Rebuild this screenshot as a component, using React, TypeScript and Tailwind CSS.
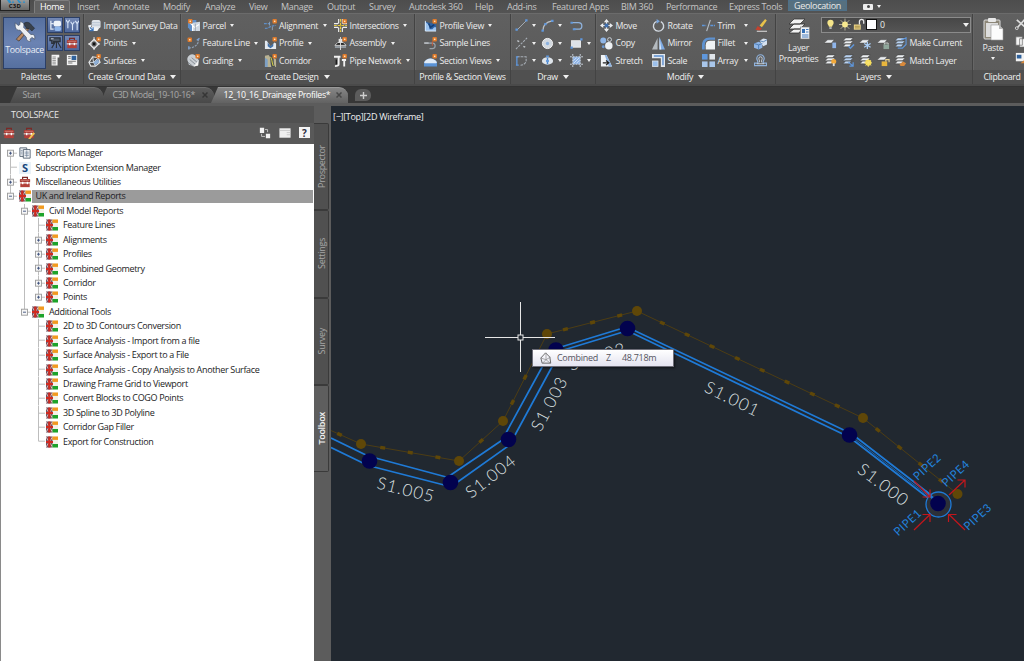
import React from "react";

type Kids = { children?: React.ReactNode };

const Ico = ({ children, w = 13, h = 13, vb = "0 0 14 14" }: Kids & { w?: number; h?: number; vb?: string }) => (
  <svg width={w} height={h} viewBox={vb} className="shrink-0 block" fill="none">
    {children}
  </svg>
);

const Spark = ({ x = 11.5, y = 2.5 }: { x?: number; y?: number }) => (
  <g>
    <rect x={x - 2.4} y={y - 2.4} width="4.8" height="4.8" rx="1" fill="#dd7a2c" />
    <rect x={x - 0.8} y={y - 0.8} width="1.6" height="1.6" fill="#ffe2b8" />
  </g>
);

const icons: Record<string, React.ReactNode> = {
  importSurvey: (
    <Ico>
      <rect x="4" y="1" width="9.5" height="9" rx="2" fill="#dfe4ea" />
      <path d="M4 4h9M4 6.5h9" stroke="#a9b8ca" strokeWidth=".8" />
      <path d="M0 7l4-1-1 3h6l3 1-2 3H2z" fill="#f2f4f6" />
      <path d="M2 9l3 3M5.500 9v3.500H1.500" stroke="#3c74b8" strokeWidth="1.200" />
    </Ico>
  ),
  points: (
    <Ico>
      <path d="M6.500 2.500L11.500 7.500l-5 5-5-5z" stroke="#e8e8e8" strokeWidth="1.400" />
      <path d="M6.500 0v5M6.500 10v4M0 7.500h4.500M9 7.500h4" stroke="#e8e8e8" strokeWidth="1" />
      <circle cx="6.500" cy="7.500" r="1.500" fill="#111" />
      <Spark />
    </Ico>
  ),
  surfaces: (
    <Ico>
      <path d="M1 9l4-6 6 1 2 5-5 4H3z" fill="#4a4a4a" stroke="#e6e6e6" strokeWidth="1.200" />
      <path d="M5 3l1 6 7 0M1 9l5 0 2 4M6 9l5-5" stroke="#dfe6ee" strokeWidth="1" />
      <path d="M6 9l5-4 1 4-4 3z" fill="#8fb0d8" />
      <Spark />
    </Ico>
  ),
  parcel: (
    <Ico>
      <path d="M1 1h9v12H4L1 9z" fill="#5d8fcb" />
      <path d="M6 4l8-1v10H6z" fill="#cfd8e2" />
      <path d="M3 4l5 5 5-3M6 5v8" stroke="#fff" strokeWidth="1.200" />
      <path d="M9 5v8" stroke="#8c97a3" strokeWidth=".8" />
      <Spark x={3.5} />
    </Ico>
  ),
  featureLine: (
    <Ico>
      <path d="M12 2c1 5-2 9-10 10" stroke="#8ea0b4" strokeWidth="1.300" strokeDasharray="2.500 1" />
      <path d="M10.500 3.500l3-2M2 10v3.500" stroke="#7fa4d4" strokeWidth="1.500" />
      <Spark x={3} y={3} />
    </Ico>
  ),
  grading: (
    <Ico>
      <path d="M1 8a5 5 0 019-5l3 4-1 5-4 1.500-6-2z" fill="#c9ced3" />
      <path d="M3 6l7 6M5 4l6 5M1 9l5 4" stroke="#7c838a" strokeWidth=".9" />
      <path d="M7 13.500l5-6v5z" fill="#f6f6f6" />
      <Spark />
    </Ico>
  ),
  alignment: (
    <Ico>
      <path d="M0 5h6M1 10c4 1 4-3 12-3" stroke="#5f8fc8" strokeWidth="1.300" strokeDasharray="3 1" />
      <path d="M6 3v4M9 8v4" stroke="#8fa5bd" strokeWidth="1" />
      <Spark />
    </Ico>
  ),
  profile: (
    <Ico>
      <path d="M1 4v9h12V7l-2-1-2 3-2 1-2-3-2-3z" fill="#e4e9ef" />
      <path d="M4 6l3 4 3-3v3l-3 2-3-2z" fill="#3d6ea8" />
      <Spark />
    </Ico>
  ),
  profileView: (
    <Ico>
      <path d="M1 3v10h12V6z" fill="#2c62a8" />
      <path d="M1 3v10h12v-4l-2 0-2 2-3 0-1-5z" fill="#9cc3ee" />
      <path d="M1.500 2v11H13" stroke="#d8e8fa" strokeWidth="1" />
      <path d="M5 5l2 4 4-3" stroke="#163f74" strokeWidth="1.600" />
      <Spark />
    </Ico>
  ),
  corridor: (
    <Ico>
      <path d="M1 2l4-1 4 2 4 3v8H1z" fill="#b9b293" />
      <path d="M5 1c3 3 1 6 3 13h4c-3-5 0-8-3-12z" fill="#444a50" />
      <path d="M7 3c2 3 1 5 3 10" stroke="#e8e043" strokeWidth="1" />
      <path d="M1 4l3 2v8H1z" fill="#7ea1c6" />
      <Spark />
    </Ico>
  ),
  intersections: (
    <Ico>
      <path d="M5 0v4L4 5H0M0 9h4l1 1v4M9 14v-4l1-1h4M9 0v4l1 1h4" stroke="#eee" strokeWidth="1.200" />
      <path d="M7 0v14M0 7h14" stroke="#e5c93b" strokeWidth="1.300" strokeDasharray="3 1" />
      <Spark />
    </Ico>
  ),
  assembly: (
    <Ico>
      <path d="M1 9l3-3h6l3 3z" fill="#1e1e1e" stroke="#e9e9e9" strokeWidth=".9" />
      <path d="M5 2h4v4H5z" fill="#e5e5e5" />
      <path d="M1 10.800h12" stroke="#a3adb7" strokeWidth="1.600" />
      <path d="M7 0v14" stroke="#ddd" strokeWidth="1" />
      <Spark />
    </Ico>
  ),
  pipeNetwork: (
    <Ico>
      <path d="M0 3h7M5 3v8c0 1.500-1.500 2-4 2" stroke="#f1f1f1" strokeWidth="2" />
      <path d="M11 6v7.500M8.500 6.500H13" stroke="#f1f1f1" strokeWidth="2" />
      <path d="M2.500 6v5" stroke="#1b1b1b" strokeWidth="1.500" />
      <Spark />
    </Ico>
  ),
  sampleLines: (
    <Ico>
      <path d="M1 6.500h8c4 0 4 6 0 6H6" stroke="#9aa3ab" strokeWidth="1.300" />
      <path d="M0 6.500h5" stroke="#c8ccd0" strokeWidth="1.300" />
      <path d="M9 4.500v5" stroke="#c45b3a" strokeWidth="1" />
      <Spark />
    </Ico>
  ),
  sectionViews: (
    <Ico>
      <path d="M0 9c3-5 10-6 14 0v4.500H0z" fill="#5b93d6" />
      <path d="M0 9c3-5 10-6 14 0l-1 1H1z" fill="#dfeaf7" />
      <Spark />
    </Ico>
  ),
  line: (
    <Ico>
      <path d="M2 12L12 2" stroke="#a9b0b8" strokeWidth="1" />
      <path d="M.5 11.500h2.500M11 1.500h2.500" stroke="#5f97dc" strokeWidth="2.400" />
    </Ico>
  ),
  xline: (
    <Ico>
      <path d="M1 13L13 1" stroke="#a9b0b8" strokeWidth="1.100" strokeDasharray="2.500 1.200" />
      <path d="M2.500 4l2 1M9 10l2 1" stroke="#c0c5ca" strokeWidth="1.500" />
    </Ico>
  ),
  pline: (
    <Ico>
      <path d="M2 3h10v4c0 3-3 5-6 5" stroke="#a9b0b8" strokeWidth="1.100" strokeDasharray="3 1" />
      <path d="M2 3v9M1 12h3M1 3h2.500" stroke="#5f97dc" strokeWidth="1.400" />
    </Ico>
  ),
  arc: (
    <Ico>
      <path d="M2 13c0-6 4-10 10-11" stroke="#b9c0c8" strokeWidth="1.200" />
      <path d="M.5 12.500H3M3.500 5.500H6M11 2h2.500" stroke="#5f97dc" strokeWidth="2.400" />
    </Ico>
  ),
  circle: (
    <Ico>
      <circle cx="7" cy="7" r="5.500" fill="#d3d9e0" stroke="#f4f4f4" />
      <circle cx="7" cy="7" r="1.800" fill="#8cb2e0" />
    </Ico>
  ),
  ellipse: (
    <Ico>
      <ellipse cx="7" cy="7.500" rx="6" ry="4" fill="#dfe5eb" />
      <path d="M7 4v7" stroke="#4d86cb" strokeWidth="1.600" />
      <path d="M5.500 2.500h3M5.500 7.500h3" stroke="#5f97dc" strokeWidth="2" />
    </Ico>
  ),
  spline: (
    <Ico>
      <path d="M2 4h7c5 0 5 7 0 7H4" stroke="#8fb2dc" strokeWidth="1.400" />
      <path d="M.5 4H3M3 11h3" stroke="#5f97dc" strokeWidth="2" />
    </Ico>
  ),
  rect: (
    <Ico>
      <rect x="1.500" y="4" width="10" height="7" fill="#dde2e8" stroke="#fff" strokeWidth=".7" />
      <path d="M11 2.500h2.500M.5 11.500H3" stroke="#5f97dc" strokeWidth="2.400" />
    </Ico>
  ),
  hatch: (
    <Ico>
      <rect x="3" y="3" width="8" height="8" fill="#8db3e6" />
      <path d="M0 3h14M0 11h14M3 0v14M11 0v14" stroke="#cfd8e3" strokeWidth="1" strokeDasharray="2 1" />
      <path d="M4 10l6-6M4 7l3-3M7 10l3-3" stroke="#e8f0fa" strokeWidth=".8" />
    </Ico>
  ),
  move: (
    <Ico>
      <path d="M7 0l2.800 3.500H4.200zM7 14l2.800-3.500H4.200zM0 7l3.500-2.800v5.600zM14 7l-3.500-2.800v5.600z" fill="#f0f3f6" />
      <path d="M7 2v10M2 7h10" stroke="#e0e4e8" strokeWidth="1.300" />
      <rect x="5" y="5" width="4" height="4" fill="#3f6fae" />
    </Ico>
  ),
  copy: (
    <Ico>
      <circle cx="3.500" cy="3.800" r="3.200" fill="#8fb5e6" />
      <circle cx="10.300" cy="2.800" r="2.100" stroke="#cfd6dd" strokeWidth="1" />
      <circle cx="9.500" cy="9.500" r="4" fill="#eef1f4" />
      <circle cx="3.500" cy="10.500" r="1.500" fill="#6b98d2" />
    </Ico>
  ),
  stretch: (
    <Ico>
      <path d="M1 13.500V1h6l6 12.500z" fill="#f0f3f6" />
      <path d="M7 1l6 12.500H9.500L5 1z" fill="#8db3e2" />
      <path d="M3 9.500h6M6.500 7l3 2.500-3 2.500" stroke="#222" strokeWidth="1.300" />
    </Ico>
  ),
  rotate: (
    <Ico>
      <path d="M5 2.500a5.500 5.500 0 104.500.2" stroke="#d3dae2" strokeWidth="1.500" />
      <path d="M5 0v5L8.500 2.500z" fill="#78a6e0" />
    </Ico>
  ),
  mirror: (
    <Ico>
      <path d="M6 1v12.500H0z" fill="#b4babf" />
      <path d="M8 0v13.500h6z" fill="#7fabe3" />
      <path d="M8 0v13.500h2z" fill="#dbe8f7" />
    </Ico>
  ),
  scale: (
    <Ico>
      <path d="M0 0h14v14H9.500V4.500H0z" fill="#e3e8ee" />
      <path d="M2 2.200h9.800V12" stroke="#5c8fd0" strokeWidth="1.500" />
      <rect x="0.500" y="7.500" width="6" height="6" fill="#9cc0ec" stroke="#e3e8ee" strokeWidth=".8" />
    </Ico>
  ),
  trim: (
    <Ico>
      <path d="M0 7h4.500M9 7h5" stroke="#5f97dc" strokeWidth="1.500" strokeDasharray="3 .8" />
      <path d="M9 1L5 13" stroke="#b8c0c8" strokeWidth="1.200" />
    </Ico>
  ),
  fillet: (
    <Ico>
      <path d="M0 13.500V9c0-5 3-8.500 8-8.500h6V3H9C5 3 3 5 3 8.500v5z" fill="#5f92d0" />
      <path d="M4 13.500V9c0-3.500 1.500-5 5-5h5v9.500z" fill="#f0f2f4" />
    </Ico>
  ),
  array: (
    <Ico>
      <rect x="0" y="0" width="6" height="6" fill="#5f97dc" />
      <rect x="8" y="0" width="6" height="6" fill="#dfe5eb" />
      <rect x="0" y="8" width="6" height="6" fill="#a9c6ea" />
      <rect x="8" y="8" width="6" height="6" fill="#a9c6ea" />
    </Ico>
  ),
  erase: (
    <Ico>
      <path d="M6 7l6-7 1.800 1.500L8.500 9z" fill="#e8c24a" />
      <path d="M4 7.500l4.500 3-2.500 2-4.500-1z" fill="#c2422e" />
      <path d="M3 13.200h11" stroke="#e8e8e8" strokeWidth="1" />
    </Ico>
  ),
  explode: (
    <Ico>
      <path d="M0 7l5-2 4 2v4.500l-4 2-5-2z" fill="#8fb5e6" />
      <path d="M6 4l4-2.500 4 1v5.500l-4 2z" fill="#d6e2f0" />
      <path d="M0 7l5 1.500L9 7M6 4l4 1.200L14 3M5 8.500v5" stroke="#3d6ea8" strokeWidth=".8" />
    </Ico>
  ),
  offset: (
    <Ico>
      <path d="M.5 12.500h13V9.800H9.800c-.5-2 1.200-3 1.200-5a4 4 0 00-8 0c0 2 1.700 3 1.200 5H.5z" stroke="#8fb2dc" strokeWidth="1.300" />
      <path d="M3 10.500h8M5.800 9c.5-2-.6-3-.6-4.200a1.800 1.800 0 013.600 0C8.800 6 7.700 7 8.200 9" stroke="#dfe6ee" strokeWidth=".9" />
    </Ico>
  ),
};

const Stack = ({ blue = false, children }: Kids & { blue?: boolean }) => (
  <Ico>
    <path d="M4 1h8l-3 3H1zM4 4.300h8L9 7.300H1zM4 7.600h6L8 10.500H1z" fill={blue ? "#b9d2f0" : "#eceff2"} stroke="#3b3b3b" strokeWidth=".5" />
    {children}
  </Ico>
);
const Sheet = ({ children }: Kids) => (
  <Ico>
    <path d="M4 3h7L8 6.500H0z" fill="#eceff2" stroke="#444" strokeWidth=".5" />
    {children}
  </Ico>
);

const Down = ({ big = false }: { big?: boolean }) => (
  <svg width={big ? 6 : 4} height={big ? 4 : 3} viewBox="0 0 6 4" preserveAspectRatio="none" className="block shrink-0">
    <path d="M0 0h6L3 4z" fill="#f0f0f0" />
  </svg>
);

const Item = ({ icon, label, arrow }: { icon: string; label: string; arrow?: boolean }) => (
  <div className="flex h-[17.500px] items-center whitespace-nowrap">
    {icons[icon]}
    <span className="ml-[2.500px]">{label}</span>
    {arrow && (
      <span className="ml-[4.500px] flex">
        <Down />
      </span>
    )}
  </div>
);

const IcoArrow = ({ icon, arrow = true }: { icon: string; arrow?: boolean }) => (
  <div className="flex h-[17.500px] items-center gap-[3.500px]">
    {icons[icon]}
    {arrow && <Down />}
  </div>
);

const Panel = ({ className, title, arrow = true, children }: Kids & { className: string; title: string; arrow?: boolean }) => (
  <section className={"flex shrink-0 flex-col border-r border-[#434343] shadow-[inset_1px_0_0_#666] " + className}>
    <div className="flex h-[57px] pt-[3px]">{children}</div>
    <div className="flex h-[14px] items-center justify-center gap-[5px] whitespace-nowrap bg-[#505050] text-[#f0f0f0]">
      {title}
      {arrow && <Down big />}
    </div>
  </section>
);

const PaletteBtn = ({ on, children }: Kids & { on?: boolean }) => (
  <div
    className={
      "flex h-[16px] w-[16px] items-center justify-center " +
      (on ? "border border-[#2c3f66] bg-gradient-to-b from-[#7388b4] to-[#4e689c]" : "")
    }
  >
    {children}
  </div>
);

const TABS = ["Insert", "Annotate", "Modify", "Analyze", "View", "Manage", "Output", "Survey", "Autodesk 360", "Help", "Add-ins", "Featured Apps", "BIM 360", "Performance", "Express Tools"];

const MenuBar = () => (
  <nav className="flex h-[13px] items-center bg-gradient-to-b from-[#4d4d4d] to-[#545454] tracking-[-0.3px] text-[#c6c6c6]">
    <div className="flex h-full w-[34px] items-start">
      <div className="flex h-[11px] w-[30px] flex-col items-center justify-end border border-t-0 border-[#222] bg-gradient-to-b from-[#9a9a9a] to-[#6a6a6a]">
        <svg width="22" height="3" viewBox="0 0 22 3">
          <path d="M3 0l2 3h2.500L6 0zM13 0l2 3h2.500L15 0zM9 0L8 3h2zM20 0l-1 3h2z" fill="#2f8fc8" />
        </svg>
        <span className="text-[6px] font-bold leading-[7px] tracking-[0.2px] text-[#111]">C3D</span>
      </div>
    </div>
    <div className="flex h-full w-[36px] items-center justify-center rounded-t-[2px] border-x border-t border-[#7e7e7e] bg-[#626262] text-white">Home</div>
    <div className="grid grid-cols-[36px_50px_42px_44px_32px_46px_42px_40px_66px_32px_45px_69px_45px_63px_59px] whitespace-nowrap pl-[7px]">
      {TABS.map((t) => (
        <span key={t}>{t}</span>
      ))}
    </div>
    <div className="flex h-[11px] w-[59px] items-center justify-center self-start border border-[#4f7088] bg-[#56707f] text-[#eaeaea]">Geolocation</div>
    <div className="ml-[16px] flex h-[6px] w-[10px] items-center justify-center rounded-[1px] bg-[#ececec]">
      <span className="h-[3px] w-[3px] rounded-full bg-[#444]" />
    </div>
    <span className="ml-[4px]">
      <Down />
    </span>
  </nav>
);

const Ribbon = () => (
  <div className="flex h-[71px] overflow-hidden border-t border-[#6b6b6b] bg-gradient-to-b from-[#606060] to-[#595959] text-[8.800px] tracking-[-0.300px] text-[#ececec]">
    <Panel className="w-[84px]" title="Palettes">
      <div className="ml-[3px] flex h-[52px] w-[43px] flex-col items-center border border-[#2c3f66] bg-gradient-to-b from-[#56709f] via-[#6b83b3] to-[#56709f] pt-[2px] text-[#e8edf5]">
        <Ico w={23} h={22} vb="0 0 24 24">
          <path d="M3 21L15 8l2 2L6 23z" fill="#b98a63" stroke="#4b3a2c" strokeWidth=".8" />
          <path d="M11 4c4-3 7-1 9 2l3 3-3 3-3-3-2 1-2-3z" fill="#39404a" stroke="#1d2229" strokeWidth=".6" />
          <path d="M2 3l3 3 2-1V2c4 0 5 3 4 6l8 8c3-1 5 1 4 5l-3-2-2 2 1 2c-4 1-5-2-5-4L7 11c-3 1-6-2-5-8z" fill="#eceff3" stroke="#3f4a5c" strokeWidth=".7" />
        </Ico>
        <span className="mt-[2px]">Toolspace</span>
      </div>
      <div className="ml-[1px] grid grid-cols-[17px_16px] grid-rows-[17.500px_17.500px_16px]">
        <PaletteBtn on>
          <Ico>
            <path d="M2 2v9h3M2 5h3" stroke="#dfe8f5" strokeWidth="1.400" />
            <rect x="5" y="2" width="8" height="6" rx="2" fill="#eef3fa" />
            <rect x="6" y="8" width="7" height="5" rx="2" fill="#8fb5ea" />
          </Ico>
        </PaletteBtn>
        <PaletteBtn on>
          <Ico>
            <path d="M0 1l2 3 2-3M2 4v6M5 3l2 3 2-3M7 6v6M10 2l2 3 2-3M12 5v7" stroke="#d6e4f7" strokeWidth="1.200" />
          </Ico>
        </PaletteBtn>
        <PaletteBtn on>
          <Ico>
            <path d="M1 2h11v4H5v2H3V5H1zM7 6l-4 7M8 6v7M9 6l4 7" stroke="#2b313b" strokeWidth="1.300" fill="#4c5666" />
            <path d="M2 3h3" stroke="#cdd5e0" />
          </Ico>
        </PaletteBtn>
        <PaletteBtn on>
          <Toolbox />
        </PaletteBtn>
        <PaletteBtn>
          <Ico w={12} h={12}>
            <path d="M3 1h9v3h-2v9.500H3z" fill="#f2f2f2" />
            <path d="M4 3.500h4M4 5.500h4M4 7.500h4M4 9.500h4M4 11.500h4" stroke="#777" strokeWidth=".9" />
          </Ico>
        </PaletteBtn>
        <PaletteBtn>
          <Ico w={12} h={12}>
            <rect x="1" y="1" width="12" height="12" fill="#f4f4f4" />
            <rect x="6.500" y="2" width="5.500" height="5" fill="#30629c" />
            <path d="M2.500 3h3M2.500 5h3M2.500 8.500h9M2.500 10.500h5" stroke="#555" strokeWidth=".9" />
          </Ico>
        </PaletteBtn>
      </div>
    </Panel>

    <Panel className="w-[97px]" title="Create Ground Data">
      <div className="pl-[4px]">
        <Item icon="importSurvey" label="Import Survey Data" />
        <Item icon="points" label="Points" arrow />
        <Item icon="surfaces" label="Surfaces" arrow />
      </div>
    </Panel>

    <Panel className="w-[234px]" title="Create Design">
      <div className="grid grid-cols-[76.500px_70.500px_76px] pl-[6px]">
        <div>
          <Item icon="parcel" label="Parcel" arrow />
          <Item icon="featureLine" label="Feature Line" arrow />
          <Item icon="grading" label="Grading" arrow />
        </div>
        <div>
          <Item icon="alignment" label="Alignment" arrow />
          <Item icon="profile" label="Profile" arrow />
          <Item icon="corridor" label="Corridor" />
        </div>
        <div>
          <Item icon="intersections" label="Intersections" arrow />
          <Item icon="assembly" label="Assembly" arrow />
          <Item icon="pipeNetwork" label="Pipe Network" arrow />
        </div>
      </div>
    </Panel>

    <Panel className="w-[96px]" title="Profile & Section Views" arrow={false}>
      <div className="pl-[9px]">
        <Item icon="profileView" label="Profile View" arrow />
        <Item icon="sampleLines" label="Sample Lines" />
        <Item icon="sectionViews" label="Section Views" arrow />
      </div>
    </Panel>

    <Panel className="w-[85px]" title="Draw">
      <div className="grid grid-cols-[26px_29px_26px] pl-[4px]">
        <div>
          <IcoArrow icon="line" />
          <IcoArrow icon="xline" />
          <IcoArrow icon="pline" />
        </div>
        <div>
          <IcoArrow icon="arc" />
          <IcoArrow icon="circle" />
          <IcoArrow icon="ellipse" />
        </div>
        <div>
          <IcoArrow icon="spline" arrow={false} />
          <IcoArrow icon="rect" />
          <IcoArrow icon="hatch" />
        </div>
      </div>
    </Panel>

    <Panel className="w-[180px]" title="Modify">
      <div className="grid grid-cols-[52px_50px_40px_12px_14px] pl-[4px]">
        <div>
          <Item icon="move" label="Move" />
          <Item icon="copy" label="Copy" />
          <Item icon="stretch" label="Stretch" />
        </div>
        <div>
          <Item icon="rotate" label="Rotate" />
          <Item icon="mirror" label="Mirror" />
          <Item icon="scale" label="Scale" />
        </div>
        <div>
          <Item icon="trim" label="Trim" />
          <Item icon="fillet" label="Fillet" />
          <Item icon="array" label="Array" />
        </div>
        <div>
          {[0, 1, 2].map((i) => (
            <div key={i} className="flex h-[17.500px] items-center pl-[2px]">
              <Down />
            </div>
          ))}
        </div>
        <div>
          <IcoArrow icon="erase" arrow={false} />
          <IcoArrow icon="explode" arrow={false} />
          <IcoArrow icon="offset" arrow={false} />
        </div>
      </div>
    </Panel>

    <Panel className="w-[197px]" title="Layers">
      <div className="flex w-[45px] flex-col items-center leading-[11px]">
        <Ico w={22} h={24} vb="0 0 22 24">
          <path d="M6 2h11l-5 5H1zM6 7h11l-5 5H1zM6 12h8l-3 4H1z" fill="#f2f2f2" stroke="#333" strokeWidth=".8" />
          <rect x="12.500" y="10" width="9" height="12" fill="#eef2f7" stroke="#777" strokeWidth=".6" />
          <rect x="14" y="12" width="3" height="4" fill="#3570b5" />
          <path d="M18 12.500h2.500M18 15h2.500M14 18h6.500M14 20h6.500" stroke="#3570b5" strokeWidth=".9" />
        </Ico>
        <span className="mt-[2px]">Layer</span>
        <span>Properties</span>
      </div>
      <div className="flex flex-col">
        <div className="flex h-[15.500px] w-[150px] items-center border border-[#8b8b8b] bg-gradient-to-b from-[#474747] to-[#555] pl-[3px] pr-[1px]">
          <Ico w={11}>
            <path d="M7 1a4 4 0 014 4c0 2-2 3-2 5H5c0-2-2-3-2-5a4 4 0 014-4z" fill="#f5e58a" />
            <path d="M5.500 11.500h3" stroke="#ccc" strokeWidth="2" />
          </Ico>
          <span className="w-[3px]" />
          <Ico w={12}>
            <path d="M7 0v14M0 7h14M2 2l10 10M12 2L2 12" stroke="#d2cbb0" strokeWidth=".9" />
            <circle cx="7" cy="7" r="3.400" fill="#f8e98f" />
          </Ico>
          <span className="w-[2px]" />
          <Ico w={12}>
            <rect x="1" y="7" width="8" height="6" fill="#f0d88a" />
            <path d="M7.500 7V3.500a2.500 2.500 0 015 0V6" stroke="#e8e8e8" strokeWidth="1.500" />
            <path d="M2 9h6M2 11h6" stroke="#7a6426" strokeWidth=".8" />
          </Ico>
          <span className="ml-[1px] h-[11px] w-[11px] border border-[#111] bg-white" />
          <span className="ml-[3px] flex-1">0</span>
          <Down big />
        </div>
        <div className="mt-[2px] flex h-[17.500px] items-center gap-[4.500px] whitespace-nowrap pl-[3px]">
          <Sheet>
            <rect x="9" y="6" width="4" height="6" fill="#8fb5ea" />
          </Sheet>
          <Stack>
            <path d="M7 10l2 2 4-4" stroke="#5f97dc" strokeWidth="1.500" />
          </Stack>
          <Sheet>
            <path d="M9 5v8M5.500 7l7 4M12.500 7l-7 4" stroke="#a9cdf5" strokeWidth="1.400" />
          </Sheet>
          <Sheet>
            <rect x="7" y="8" width="6" height="5" fill="#8fa79b" />
            <path d="M8 8V6.500h4V8" stroke="#cfd8d3" />
          </Sheet>
          <Stack blue>
            <path d="M8 3l5-2v7l-4 4H4" stroke="#5f97dc" strokeWidth="1.200" />
          </Stack>
          <span className="-ml-[2px]">Make Current</span>
        </div>
        <div className="flex h-[17.500px] items-center gap-[4.500px] whitespace-nowrap pl-[3px]">
          <Stack>
            <circle cx="10.500" cy="8" r="2.700" fill="#f2a93a" />
            <path d="M10.500 10v3" stroke="#ddd" strokeWidth="2" />
          </Stack>
          <Stack blue>
            <path d="M7 9l5 4M12 9v4H8" stroke="#5f97dc" strokeWidth="1.300" />
          </Stack>
          <Stack>
            <circle cx="10" cy="9.500" r="3.300" fill="#f7dc4c" />
            <path d="M10 5v9M5.500 9.500h9M7 6.500l6 6M13 6.500l-6 6" stroke="#f7e37a" strokeWidth=".8" />
          </Stack>
          <Sheet>
            <rect x="5" y="8" width="6" height="5" fill="#e9b63c" />
            <path d="M9.500 8V6h3.500v3" stroke="#e9d59a" strokeWidth="1.200" />
          </Sheet>
          <Stack>
            <path d="M6 11l4-3 3 2-2 3H7z" fill="#d98a3c" />
          </Stack>
          <span className="-ml-[2px]">Match Layer</span>
        </div>
      </div>
    </Panel>

    <Panel className="w-[59px]" title="Clipboard" arrow={false}>
      <div className="flex w-[40px] shrink-0 flex-col items-center leading-[11px]">
        <Ico w={21} h={24} vb="0 0 21 24">
          <rect x="1" y="3" width="16" height="19" rx="1" fill="#8d8778" stroke="#ddd" strokeWidth="1" />
          <rect x="5" y="1" width="8" height="4" rx="1" fill="#e8e8e8" />
          <path d="M3 6h12v14H3z" fill="#dcdcdc" />
          <path d="M8 8h8l4 4v11H8z" fill="#fcfcfc" stroke="#999" strokeWidth=".6" />
          <path d="M16 8v4h4z" fill="#b9b9b9" />
        </Ico>
        <span className="mt-[2px]">Paste</span>
        <span className="mt-[3px] flex">
          <Down />
        </span>
      </div>
      <div className="flex flex-col gap-[4.500px] pl-[1px]">
        <Ico>
          <path d="M3 3l9 8M12 2L4 11" stroke="#ddd" strokeWidth="1.800" />
          <circle cx="3" cy="12" r="1.500" stroke="#ddd" />
        </Ico>
        <Ico>
          <path d="M2 2h7v9H2zM6 4h7v9H6z" fill="#f2f2f2" stroke="#666" strokeWidth=".7" />
        </Ico>
        <Ico>
          <rect x="2" y="1" width="10" height="9" fill="#f2f2f2" />
          <rect x="3" y="3" width="5" height="4" fill="#30629c" />
          <path d="M7 12l5-4 2 4z" fill="#d98a3c" />
        </Ico>
      </div>
    </Panel>
  </div>
);

function Toolbox({ pen = false }: { pen?: boolean }) {
  return (
    <Ico w={12} h={12}>
      <path d="M4.200 4V1.500h5.600V4" stroke="#7a2a27" strokeWidth="1.400" />
      <rect x="1" y="3.500" width="12" height="4" rx="1" fill="#a63a34" />
      <path d="M2 5h10" stroke="#d98a82" strokeWidth=".9" />
      <rect x="1.500" y="8.500" width="11" height="4.500" fill="#b3403a" />
      <path d="M.8 8h12.400" stroke="#f3dcd8" strokeWidth="1.200" />
      <rect x="3.500" y="6.800" width="1.600" height="2.800" fill="#fff" />
      <rect x="9" y="6.800" width="1.600" height="2.800" fill="#fff" />
      {pen && <path d="M6 14l6-8 2 1.500-5.500 6.500z" fill="#f0c050" />}
    </Ico>
  );
}

const FileTab = ({ className, label, active, close = true }: { className: string; label: string; active?: boolean; close?: boolean }) => (
  <div className={"relative flex h-[16px] items-center whitespace-nowrap pl-[8.500px] " + className}>
    <span
      className={
        "absolute inset-y-0 -left-[4px] right-[1px] rounded-tl-[5px] rounded-tr-[9px] border-t bg-gradient-to-b [clip-path:polygon(7px_0,100%_0,100%_100%,0_100%)] " +
        (active ? "border-[#9a9a9a] from-[#868686] to-[#626262]" : "border-[#6f6f6f] from-[#5c5c5c] to-[#494949]")
      }
    />
    <span className={"relative flex-1 " + (active ? "text-white" : "text-[#a9a9a9]")}>{label}</span>
    {close && (
      <svg width="6" height="6" viewBox="0 0 6 6" className="relative mr-[7px] shrink-0">
        <path d="M.5.5l5 5M5.500.5l-5 5" stroke={active ? "#474747" : "#363636"} strokeWidth="1.500" />
      </svg>
    )}
  </div>
);

const FileTabs = () => (
  <div className="flex h-[19px] items-end border-b-[3px] border-[#5c5c5c] bg-[#373737] pl-[14px] text-[8.800px] tracking-[-0.370px]">
    <FileTab className="w-[90px]" label="Start" close={false} />
    <FileTab className="w-[111px]" label="C3D Model_19-10-16*" />
    <FileTab className="w-[134px]" label="12_10_16_Drainage Profiles*" active />
    <div className="ml-[6px] flex h-[12px] w-[16px] items-center justify-center self-center rounded-t-[6px] rounded-br-[5px] bg-[#5c5c5c]">
      <svg width="7" height="7" viewBox="0 0 7 7">
        <path d="M3.500 0v7M0 3.500h7" stroke="#cfcfcf" strokeWidth="1.400" />
      </svg>
    </div>
  </div>
);

const UkIcon = () => (
  <svg width="12" height="12" viewBox="0 0 12 12" className="block shrink-0">
    <rect x="6" y="0.500" width="6" height="11" fill="#f4f1e6" />
    <rect x="0" y="0.500" width="6.500" height="11" fill="#6d5567" />
    <path d="M0 1l6.500 10M6.500 1L0 11" stroke="#e9c2bd" strokeWidth="1" />
    <path d="M3.300 .5v11M0 6h7" stroke="#cf2a20" strokeWidth="2.200" />
    <rect x="6.500" y="0.500" width="5.500" height="3.400" fill="#f29a1f" />
    <rect x="6.500" y="8" width="5.500" height="3.500" fill="#1da32a" />
  </svg>
);

const ReportsIcon = () => (
  <Ico w={12} h={12}>
    <path d="M1 1h8v10H1z" fill="#eef1f4" stroke="#4c5a6a" />
    <path d="M5 3h8v10H5z" fill="#f6f8fa" stroke="#4c5a6a" />
    <path d="M6.500 6h5M6.500 8h5M6.500 10h5M9 4v8M2 4h2M2 6h2M2 8h2" stroke="#71839a" strokeWidth=".8" />
  </Ico>
);

type Node = { d: number; t: string; e?: "+" | "-"; k?: string };
const NODES: Node[] = [
  { d: 0, t: "Reports Manager", e: "+", k: "reports" },
  { d: 0, t: "Subscription Extension Manager", k: "s" },
  { d: 0, t: "Miscellaneous Utilities", e: "+", k: "box" },
  { d: 0, t: "UK and Ireland Reports", e: "-", k: "sel" },
  { d: 1, t: "Civil Model Reports", e: "-" },
  { d: 2, t: "Feature Lines" },
  { d: 2, t: "Alignments", e: "+" },
  { d: 2, t: "Profiles", e: "+" },
  { d: 2, t: "Combined Geometry", e: "+" },
  { d: 2, t: "Corridor", e: "+" },
  { d: 2, t: "Points", e: "+" },
  { d: 1, t: "Additional Tools", e: "-" },
  { d: 2, t: "2D to 3D Contours Conversion" },
  { d: 2, t: "Surface Analysis - Import from a file" },
  { d: 2, t: "Surface Analysis - Export to a File" },
  { d: 2, t: "Surface Analysis - Copy Analysis to Another Surface" },
  { d: 2, t: "Drawing Frame Grid to Viewport" },
  { d: 2, t: "Convert Blocks to COGO Points" },
  { d: 2, t: "3D Spline to 3D Polyline" },
  { d: 2, t: "Corridor Gap Filler" },
  { d: 2, t: "Export for Construction" },
];
const LAST_IN_BRANCH = [3, 10, 11, 20];

const Guide = ({ node, i }: { node: Node; i: number }) => (
  <svg width="14" height="14.430" viewBox="0 0 14 14.430" className="block shrink-0">
    <path d={`M6.500 ${i === 0 ? 7 : 0}V${LAST_IN_BRANCH.includes(i) ? 7.2 : 14.5}M6.500 7.200H13`} stroke="#bdbdbd" strokeWidth="1" />
    {node.e && (
      <g>
        <rect x="3.500" y="4.200" width="6" height="6" fill="#f6f6f6" stroke="#9a9a9a" strokeWidth=".9" />
        <path d={node.e === "+" ? "M5 7.200h3M6.500 5.700v3" : "M5 7.200h3"} stroke="#3c4f7c" strokeWidth=".9" />
      </g>
    )}
  </svg>
);

const Tree = () => (
  <div className="flex-1 overflow-hidden border-l border-[#8a8a8a] bg-white pl-[3.300px] pt-[2px] text-[9px] tracking-[-0.340px] text-[#1c1c24]">
    {NODES.map((n, i) => (
      <div key={n.t} className="flex h-[14.430px] items-center whitespace-nowrap">
        {n.d === 1 && <span className="w-[13.500px] shrink-0" />}
        {n.d === 2 && (
          <span className="flex h-full w-[27.500px] shrink-0 pl-[20px]">{i < 11 && <span className="h-full w-px bg-[#bdbdbd]" />}</span>
        )}
        <Guide node={n} i={i} />
        <span className="w-[14px] shrink-0 pl-[0.500px]">
          {n.k === "reports" ? (
            <ReportsIcon />
          ) : n.k === "s" ? (
            <span className="flex h-[12px] w-[12px] items-center justify-center bg-[#eaf2f8] text-[11px] font-bold leading-none text-[#16447c]">S</span>
          ) : n.k === "box" ? (
            <Toolbox />
          ) : (
            <UkIcon />
          )}
        </span>
        <span className={n.k === "sel" ? "mr-px flex h-[13.500px] flex-1 items-center bg-[#9b9b9b] pl-[3.200px]" : "pl-[3.200px]"}>{n.t}</span>
      </div>
    ))}
  </div>
);

const Toolspace = () => (
  <aside className="flex w-[331px] shrink-0 bg-[#5c5c5c]">
    <div className="flex w-[314px] flex-col">
      <div className="flex h-[17px] items-center bg-[#515151] pl-[11px] pt-[1px] text-[9px] tracking-[-0.300px] text-[#e6e6e6]">TOOLSPACE</div>
      <div className="flex h-[21px] items-center bg-[#595959] pb-[2px] pl-[3px] pr-[4px]">
        <Toolbox />
        <span className="w-[8px]" />
        <Toolbox pen />
        <span className="flex-1" />
        <Ico w={12} h={12}>
          <path d="M1 1h5v6H1zM8 8h5v5H8z" fill="#f2f2f2" />
          <path d="M7 3h3v3M3 8v3h4" stroke="#cfcfcf" />
        </Ico>
        <span className="w-[8px]" />
        <Ico w={12} h={12}>
          <rect x="0.500" y="1.500" width="13" height="11" fill="#efefef" />
          <path d="M1 4h12M9 6.500h4M9 9h4" stroke="#c5c5c5" />
        </Ico>
        <span className="w-[8px]" />
        <span className="flex h-[11px] w-[11px] items-center justify-center bg-[#f4f4f4] text-[10px] font-bold leading-none text-[#2c2c40]">?</span>
      </div>
      <Tree />
    </div>
    <div className="flex flex-col pt-[17px]">
      {["Prospector", "Settings", "Survey", "Toolbox"].map((t) => (
        <div
          key={t}
          className={
            "flex h-[87.300px] w-[15px] items-center justify-center rounded-r-[2px] border-b border-r border-t border-[#3a3a3a] pl-[1px] text-[9px] tracking-[-0.300px] " +
            (t === "Toolbox" ? "bg-[#5e5e5e] font-semibold text-[#f0f0f0]" : "bg-[#505050] text-[#a6a6a6]")
          }
        >
          <span className="rotate-180 [writing-mode:vertical-rl]">{t}</span>
        </div>
      ))}
    </div>
  </aside>
);

const SURVEY_PTS: [number, number][] = [[303, 418], [361, 444], [459, 461], [503, 421], [547, 334], [637, 311], [863, 418], [957.5, 494]];
const MARKS: number[][] = [[40], [22, 50, 78], [30], [21, 49, 77], [19, 47, 75], [28, 55.5, 83, 111, 138.5, 166, 194, 221.5], [19, 47, 74, 100]];
const MANHOLES = [[369.5, 461], [450.5, 482.5], [508.5, 439.5], [556, 350], [627.5, 328.5], [849.5, 435], [938, 503.5]];
const LABELS: [string, number, number, number][] = [
  ["S1.005", 405.5, 489.5, 14],
  ["S1.004", 490.5, 476.5, -38],
  ["S1.003", 549, 404, -62],
  ["S1.002", 597, 356.5, -17],
  ["S1.001", 732, 398.5, 26],
  ["S1.000", 883, 484.5, 37],
];
const PIPES: [string, number, number][] = [["PIPE2", 927, 467], ["PIPE4", 955.5, 473.5], ["PIPE1", 907.5, 522.5], ["PIPE3", 977.5, 517]];

const Drawing = () => (
  <svg width="693" height="555" viewBox="331 106 693 555" className="block">
    <g>
      <polyline points={SURVEY_PTS.map((p) => p.join(",")).join(" ")} fill="none" stroke="#4d3d14" strokeWidth="1" />
      {MARKS.map((ds, i) => {
        const [x1, y1] = SURVEY_PTS[i];
        const [x2, y2] = SURVEY_PTS[i + 1];
        const a = Math.atan2(y2 - y1, x2 - x1);
        return ds.map((d) => (
          <rect key={i + "-" + d} x="-2.500" y="-1.700" width="5" height="3.400" fill="#5f4708" transform={`translate(${x1 + Math.cos(a) * d} ${y1 + Math.sin(a) * d}) rotate(${(a * 180) / Math.PI})`} />
        ));
      })}
      {SURVEY_PTS.slice(1).map(([x, y]) => (
        <circle key={x} cx={x} cy={y} r="5" fill="#5f4708" />
      ))}
    </g>
    <g stroke="#1f7ad6" strokeWidth="1.700" fill="none">
      <path d="M331 438L368 456M331 447.500L366 464.500" />
      <path d="M370 456.500L450 478M372 466.500L448 486" />
      <path d="M450 475.500L506 437.500M452 486L511 444" />
      <path d="M506 433L552 349M515 435L560 352" />
      <path d="M556 348.500L628 326.500M557 352L628 330.500" />
      <path d="M628 327.500L850 433M628 331L849 437" />
      <path d="M850 432.500L938 500.500M848.500 436.500L936 504" />
    </g>
    <path d="M849 434.500L937 502.500" stroke="#1a62ad" strokeWidth="1" />
    <circle cx="938.500" cy="504.500" r="12.500" fill="#2c3038" stroke="#1f7ad6" strokeWidth="1.300" />
    <path d="M925 491L936 501" stroke="#1f7ad6" strokeWidth="2.500" />
    {MANHOLES.map(([x, y]) => (
      <circle key={x} cx={x} cy={y} r="7.800" fill="#02024e" />
    ))}
    <g stroke="#c3161c" strokeWidth="1.200" fill="none">
      <path d="M914 481L930 497M930 489.500V497H922.500" />
      <path d="M949 495L965 480M957.500 480H965V487.500" />
      <path d="M914 530L930 514.500M922.500 514.500H930V522" />
      <path d="M965 530L949 514.500M956.500 514.500H948.500V522" />
    </g>
    <g fill="#dfe2e4" fontFamily="Lato, 'Open Sans', sans-serif" fontWeight="300" fontSize="17" textAnchor="middle">
      {LABELS.map(([t, x, y, r]) => (
        <text key={t} transform={`translate(${x} ${y}) rotate(${r})`} y="6" textLength="58">
          {t}
        </text>
      ))}
    </g>
    <g fill="#2382dc" fontFamily="Lato, 'Open Sans', sans-serif" fontSize="11.500" textAnchor="middle">
      {PIPES.map(([t, x, y]) => (
        <text key={t} transform={`translate(${x} ${y}) rotate(-43)`} y="4" textLength="32.500">
          {t}
        </text>
      ))}
    </g>
    <g stroke="#e6e6e6" strokeWidth="1" fill="none">
      <path d="M520.500 302V335M520.500 340V372M485 337.500H518M523 337.500H555" />
      <rect x="518" y="335" width="5" height="5" />
    </g>
  </svg>
);

const Viewport = () => (
  <main className="relative flex-1 overflow-hidden bg-[#212830]">
    <Drawing />
    <div className="absolute left-[2px] top-[5px] text-[9px] leading-[12px] tracking-[-0.300px] text-[#f0f0f0]">[−][Top][2D Wireframe]</div>
    <div className="absolute left-[201px] top-[243px] flex h-[18px] w-[142px] items-center border border-[#6d6d78] bg-gradient-to-b from-white to-[#e4e4f0] pb-[1px] pl-[7px] text-[9px] tracking-[-0.300px] text-[#55555f] shadow-[1px_1px_2px_rgba(0,0,0,0.5)]">
      <Ico w={12} h={12}>
        <path d="M1 7l5.500-6 5 5 1 7H2.500z" stroke="#555" strokeWidth="1" />
        <path d="M1 7l6 2 5-3M7 9V1M7 9l-4 4M7 9l5 4" stroke="#888" strokeWidth=".8" />
      </Ico>
      <span className="ml-[5px] w-[49px]">Combined</span>
      <span className="w-[16px]">Z</span>
      <span>48.718m</span>
    </div>
  </main>
);

export default function App() {
  return (
    <div className="flex h-[661px] w-[1024px] flex-col overflow-hidden bg-[#5c5c5c] font-['Open_Sans','Noto_Sans',sans-serif] text-[9px] leading-[12px]">
      <MenuBar />
      <Ribbon />
      <div className="h-[3px] border-b border-[#333] bg-[#4a4a4a]" />
      <FileTabs />
      <div className="flex min-h-0 flex-1">
        <Toolspace />
        <Viewport />
      </div>
    </div>
  );
}
